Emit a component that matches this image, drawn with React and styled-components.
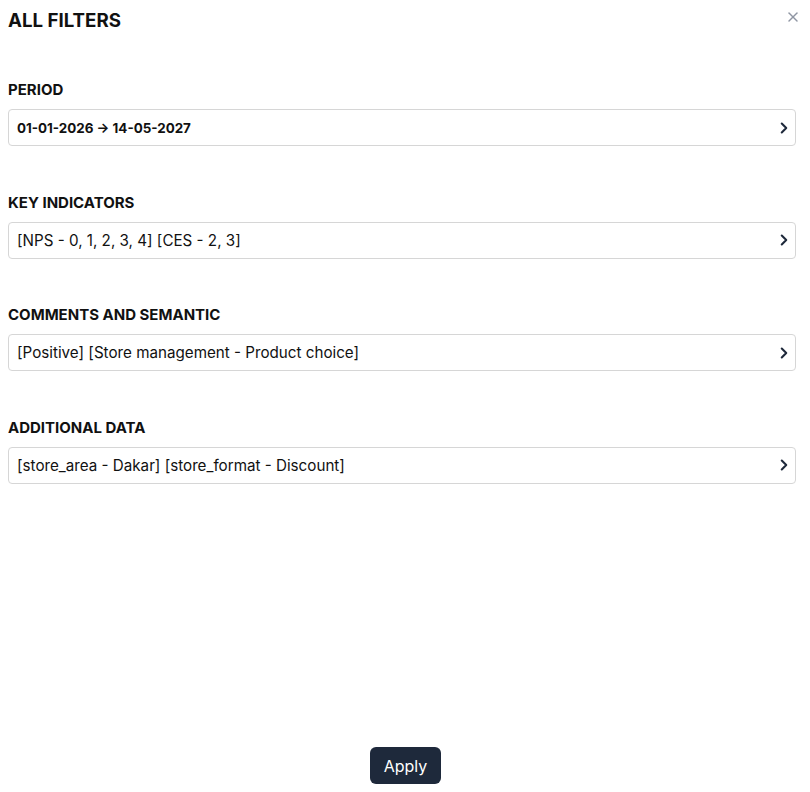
import React from 'react';
import styled, { createGlobalStyle } from 'styled-components';
import { ChevronRight, X } from 'lucide-react';

const GlobalStyle = createGlobalStyle`
    body {
        margin: 0;
        font-family: Inter, "Noto Sans", sans-serif;
        color: #111;
        background: #fff;
    }
`

const Panel = styled.div`
    position: relative;
    display: flex;
    flex-direction: column;
    min-height: 100vh;
    box-sizing: border-box;
    padding: 9px 14px 8px 8px;
`
const Title = styled.h1`
    margin: 0;
    font-size: 18.7px;
    line-height: 24px;
    font-weight: 700;
    color: #111;
`
const CloseButton = styled.button`
    position: absolute;
    top: 9px;
    right: 9px;
    border: none;
    background: none;
    padding: 0;
    color: #8f96a3;
    cursor: pointer;
    display: flex;
`
const Sections = styled.div`
    display: flex;
    flex-direction: column;
    gap: 46.5px;
    margin-top: 47px;
`
const Section = styled.div`
    display: flex;
    flex-direction: column;
    gap: 9px;
`
const Label = styled.div`
    font-size: 15px;
    line-height: 20px;
    font-weight: 700;
    color: #111;
`
const Field = styled.button`
    display: flex;
    align-items: center;
    justify-content: space-between;
    height: 37px;
    box-sizing: border-box;
    padding: 0 2px 0 8px;
    border: 1px solid #d6d6d6;
    border-radius: 4px;
    background: #fff;
    font-family: inherit;
    font-size: ${p => (p.$bold ? '13.4px' : '15.2px')};
    font-weight: ${p => (p.$bold ? 700 : 400)};
    color: #111;
    text-align: left;
    cursor: pointer;
    svg {
        color: #1e293b;
        flex-shrink: 0;
    }
`
const Footer = styled.div`
    margin-top: auto;
    display: flex;
    justify-content: center;
    padding-left: 7px;
`
const ApplyButton = styled.button`
    height: 37px;
    padding: 0 14px;
    border: none;
    border-radius: 6px;
    background: #1e293b;
    color: #fff;
    font-family: inherit;
    font-size: 16px;
    cursor: pointer;
`

const filters = [
    { label: 'PERIOD', value: '01-01-2026 → 14-05-2027', bold: true },
    { label: 'KEY INDICATORS', value: '[NPS - 0, 1, 2, 3, 4] [CES - 2, 3]' },
    { label: 'COMMENTS AND SEMANTIC', value: '[Positive] [Store management - Product choice]' },
    { label: 'ADDITIONAL DATA', value: '[store_area - Dakar] [store_format - Discount]' },
]

const App = () => {
    return (
        <Panel>
            <GlobalStyle />
            <Title>ALL FILTERS</Title>
            <CloseButton aria-label="Close">
                <X size={16} strokeWidth={2.25} />
            </CloseButton>
            <Sections>
                {filters.map(f => (
                    <Section key={f.label}>
                        <Label>{f.label}</Label>
                        <Field $bold={f.bold}>
                            <span>{f.value}</span>
                            <ChevronRight size={18} strokeWidth={2.75} />
                        </Field>
                    </Section>
                ))}
            </Sections>
            <Footer>
                <ApplyButton>Apply</ApplyButton>
            </Footer>
        </Panel>
    )
}

export default App
